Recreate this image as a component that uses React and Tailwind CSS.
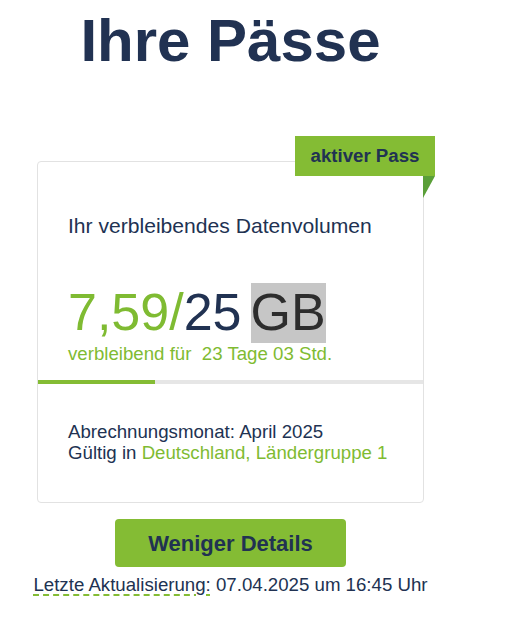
import React from "react";

export default function App() {
  const used = 7.59;
  const total = 25;
  return (
    <div className="min-h-[623px] w-[507px] bg-white" style={{ fontFamily: '"Liberation Sans", Arial, sans-serif' }}>
      <div className="ml-[37px] flex w-[387px] flex-col items-center">
        <h1 className="mt-[11px] whitespace-nowrap text-[60px] font-bold leading-none text-[#213252]">Ihre Pässe</h1>

        <div className="relative mt-[90px] w-[387px] rounded-[4px] border border-[#e2e2e2] bg-white">
          <div className="absolute right-[-12px] top-[-26px] flex flex-col items-end">
            <div className="flex h-[40px] w-[140px] items-center justify-center bg-[#84bc34] text-[18.67px] font-bold text-[#213252]">
              aktiver Pass
            </div>
            <svg width="12" height="22" viewBox="0 0 12 22" className="block">
              <polygon points="0,0 12,0 0,22" fill="#5a9f38" />
            </svg>
          </div>

          <div className="pl-[30px] pt-[52px]">
            <div className="text-[21.1px] leading-[1.15] text-[#213252]">Ihr verbleibendes Datenvolumen</div>
            <div className="mt-[45px] flex items-baseline whitespace-nowrap text-[52px] leading-[1.15]">
              <span className="text-[#7fbb32]">7,59/</span>
              <span className="text-[#213252]">25</span>
              <span className="ml-[9px] bg-[#c6c6c6] text-[#2d2d2d]">GB</span>
            </div>
            <div className="whitespace-pre text-[18.67px] leading-[1.15] text-[#7fbb32]">verbleibend für  23 Tage 03 Std.</div>
          </div>

          <div className="mt-[15px] h-[4px] w-full bg-[#e6e6e6]">
            <div className="h-full bg-[#84bc34]" style={{ width: `${(used / total) * 100}%` }} />
          </div>

          <div className="pb-[39px] pl-[30px] pt-[37px] text-[18.67px] leading-[1.15] text-[#213252]">
            <div>Abrechnungsmonat: April 2025</div>
            <div>
              Gültig in <span className="text-[#7fbb32]">Deutschland, Ländergruppe 1</span>
            </div>
          </div>
        </div>

        <button className="mt-[16px] flex h-[48px] w-[231px] items-center justify-center rounded-[4px] bg-[#84bc34] text-[22px] font-bold text-[#213252]">
          Weniger Details
        </button>

        <div className="mt-[7px] whitespace-nowrap text-[18.67px] leading-[1.15] text-[#213252]">
          <span className="underline decoration-[#84bc34] decoration-dashed decoration-[2px] underline-offset-[3px]">Letzte Aktualisierung:</span> 07.04.2025 um 16:45 Uhr
        </div>
      </div>
    </div>
  );
}
